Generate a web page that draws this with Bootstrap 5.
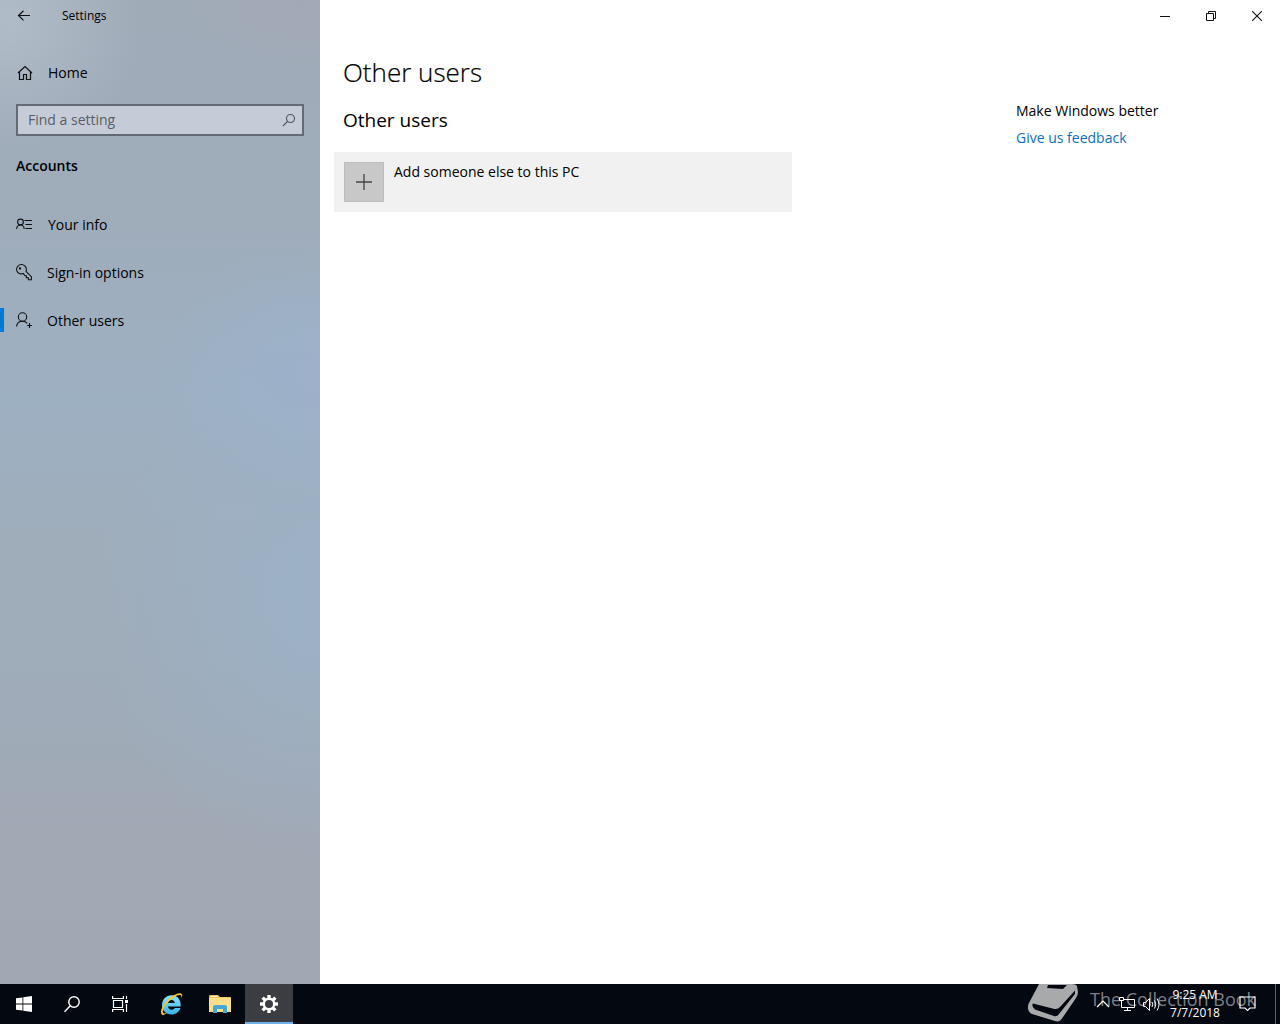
<!DOCTYPE html>
<html lang="en">
<head>
<meta charset="utf-8">
<meta name="viewport" content="width=device-width, initial-scale=1">
<title>Settings</title>
<link rel="stylesheet" href="https://cdn.jsdelivr.net/npm/bootstrap@5.3.0/dist/css/bootstrap.min.css">
<style>
  body { font-family: "Open Sans", "Noto Sans", sans-serif; font-size: 14px; line-height: 20px; color: #000; background: #fff; }
  svg { display: block; flex: none; }
  button { font: inherit; color: inherit; background: none; border: 0; padding: 0; }
  .side-pane {
    width: 320px;
    background:
      radial-gradient(circle at 10px 20px, rgba(180,192,203,.8), rgba(180,192,203,0) 130px),
      radial-gradient(ellipse 170px 130px at 320px 370px, rgba(156,178,205,.8), rgba(156,178,205,0)),
      radial-gradient(ellipse 230px 260px at 320px 600px, rgba(156,178,200,.9), rgba(156,178,200,0)),
      radial-gradient(ellipse 130px 70px at 300px 0, rgba(164,168,182,.9), rgba(164,168,182,0)),
      linear-gradient(180deg, #a0abb8 0, #9facba 200px, #9db0c2 400px, #9fadbb 540px, #9fabb8 720px, #a2a8b4 850px, #a1a7b3 100%);
  }
  .caption-row { height: 32px; font-size: 12px; }
  .caption-text { margin-left: 14px; }
  .back-btn { width: 48px; height: 32px; }
  .win-btn { width: 46px; height: 32px; }
  .nav-row { height: 48px; gap: 15px; padding-left: 16px; color: #000; text-decoration: none; position: relative; }
  .home-row { margin-top: 17px; }
  .nav-row.current::before { content: ""; position: absolute; left: 0; top: 11px; width: 4px; height: 24px; background: #0078d7; }
  .find-box { height: 32px; margin: 7px 16px 0; border: 2px solid #626b75; background: #c6ccd7; padding: 0 6px 0 10px; }
  .find-box input { border: 0; background: none; outline: 0; padding: 0; min-width: 0; color: #000; line-height: 20px; }
  .find-box input::placeholder { color: #575e68; opacity: 1; }
  .group-title { font-size: 14px; font-weight: 600; line-height: 20px; margin: 20px 16px 25px; }
  .page-body { padding: 20px 0 0 14px; }
  .users-col { flex: 0 1 458px; }
  .page-title { font-size: 26px; line-height: 40px; font-weight: 300; margin: 0 9px 14px; -webkit-text-stroke: .2px #000; }
  .section-title { font-size: 19px; line-height: 28px; font-weight: 400; margin: 0 9px 18px; }
  .add-tile { height: 60px; background: #f1f1f1; padding: 10px; gap: 10px; text-align: left; }
  .plus-box { width: 40px; height: 40px; background: #c8c8c8; border: 1px solid #bdbdbd; }
  .help-col { width: 264px; padding-top: 49px; }
  .help-col p { margin-bottom: 7px; }
  .help-col a { color: #0a70c0; text-decoration: none; }
  .taskbar { height: 40px; background: #040810; color: #fff; position: relative; overflow: hidden; }
  .task-btn { width: 48px; height: 40px; }
  .task-btn.running { background: #3b3d42; border-bottom: 2px solid #6fb1e8; padding-top: 2px; margin-left: 1px; }
  .tray { font-size: 12px; line-height: 18px; }
  .clock { width: 70px; text-align: center; }
  .notes-btn { width: 34px; height: 40px; }
  .desk-edge { width: 5px; height: 40px; border-left: 1px solid #5d6066; margin-left: 11px; }
  .stamp { position: absolute; right: 24px; top: 0; height: 40px; gap: 10px; font-size: 18px; color: #7c7f85; pointer-events: none; }
  .stamp span { padding-bottom: 10px; }
</style>
<script src="https://cdn.jsdelivr.net/npm/bootstrap@5.3.0/dist/js/bootstrap.bundle.min.js"></script>
</head>
<body class="d-flex flex-column min-vh-100">
<div class="d-flex flex-grow-1">
  <aside class="side-pane flex-shrink-0">
    <div class="caption-row d-flex align-items-center">
      <button class="back-btn d-flex align-items-center justify-content-center" aria-label="Back">
        <svg width="14" height="12" viewBox="0 0 14 12" fill="none" stroke="#111" stroke-width="1.2"><path d="M13 5.5H1.5M6.5.7L1.5 5.5l5 4.9"/></svg>
      </button>
      <span class="caption-text">Settings</span>
    </div>
    <a href="#" class="nav-row home-row d-flex align-items-center">
      <svg width="17" height="16" viewBox="0 0 17 16" fill="none" stroke="#111" stroke-width="1.2"><path d="M2 8l7-6.500L16 8M3.500 6.800v7.700h4v-5h3v5h4V6.800"/></svg>
      <span>Home</span>
    </a>
    <div class="find-box d-flex align-items-center">
      <input type="text" class="flex-grow-1" placeholder="Find a setting" aria-label="Find a setting">
      <svg width="14" height="14" viewBox="0 0 14 14" fill="none" stroke="#4b525b" stroke-width="1.1"><circle cx="8.500" cy="5.500" r="4"/><path d="M5.500 8.500L.8 13.200"/></svg>
    </div>
    <h2 class="group-title">Accounts</h2>
    <nav>
      <a href="#" class="nav-row d-flex align-items-center">
        <svg width="17" height="16" viewBox="0 0 17 16" fill="none" stroke="#111" stroke-width="1.1"><circle cx="4.500" cy="5" r="2.900"/><path d="M.6 12c.2-2.600 1.600-4 3.900-4s3.500 1.400 3.700 4M8.500 3.500H16M9.500 7.500H16M9.500 11.500H16"/></svg>
        <span>Your info</span>
      </a>
      <a href="#" class="nav-row d-flex align-items-center">
        <svg width="16" height="18" viewBox="0 0 16 18" fill="none" stroke="#111" stroke-width="1.1"><path d="M7.300 9.500C4 10.800.6 8.600.6 5.600a4.900 4.900 0 0 1 9.800-.3c0 .8-.1 1.500-.4 2.100l5.400 5.300v3h-3v-2h-2v-2h-1.500z"/><circle cx="4" cy="4.500" r=".6" fill="#111"/></svg>
        <span>Sign-in options</span>
      </a>
      <a href="#" class="nav-row current d-flex align-items-center" aria-current="page">
        <svg width="16" height="18" viewBox="0 0 16 18" fill="none" stroke="#111" stroke-width="1.1"><circle cx="6.500" cy="5" r="4.200"/><path d="M.6 14.500c.2-3.300 2.600-5.300 5.900-5.300 2.100 0 3.700.8 4.700 2.200M13.500 11v5M11 13.500h5"/></svg>
        <span>Other users</span>
      </a>
    </nav>
  </aside>
  <main class="flex-grow-1">
    <div class="caption-row d-flex justify-content-end">
      <button class="win-btn d-flex align-items-center justify-content-center" aria-label="Minimize"><svg width="10" height="10" viewBox="0 0 10 10" stroke="#111"><path d="M0 5.500h10"/></svg></button>
      <button class="win-btn d-flex align-items-center justify-content-center" aria-label="Restore"><svg width="10" height="10" viewBox="0 0 10 10" fill="none" stroke="#111"><path d="M.5 2.500h7v7h-7zM2.500 2.500v-2h7v7h-2"/></svg></button>
      <button class="win-btn d-flex align-items-center justify-content-center" aria-label="Close"><svg width="10" height="10" viewBox="0 0 10 10" stroke="#111" stroke-width="1.100"><path d="M0 0l10 10M10 0L0 10"/></svg></button>
    </div>
    <div class="page-body d-flex justify-content-between">
      <section class="users-col">
        <h1 class="page-title">Other users</h1>
        <h2 class="section-title">Other users</h2>
        <button class="add-tile d-flex w-100 align-items-start">
          <span class="plus-box d-flex align-items-center justify-content-center"><svg width="16" height="16" viewBox="0 0 16 16" stroke="#444" stroke-width="1.300"><path d="M8 0v16M0 8h16"/></svg></span>
          <span>Add someone else to this PC</span>
        </button>
      </section>
      <section class="help-col">
        <p>Make Windows better</p>
        <a href="#">Give us feedback</a>
      </section>
    </div>
  </main>
</div>
<footer class="taskbar d-flex align-items-center">
  <button class="task-btn d-flex align-items-center justify-content-center" aria-label="Start"><svg width="16" height="16" viewBox="0 0 16 16" fill="#fff"><path d="M0 2.300l6.500-.9v6.100H0zM7.300 1.300L16 0v7.500H7.300zM0 8.400h6.500v6.200L0 13.700zM7.300 8.400H16V16l-8.700-1.300z"/></svg></button>
  <button class="task-btn d-flex align-items-center justify-content-center" aria-label="Search"><svg width="16" height="17" viewBox="0 0 16 17" fill="none" stroke="#fff" stroke-width="1.400"><circle cx="10" cy="6" r="5.200"/><path d="M6.300 9.700L.5 15.800"/></svg></button>
  <button class="task-btn d-flex align-items-center justify-content-center" aria-label="Task view"><svg width="16" height="16" viewBox="0 0 16 16" fill="none" stroke="#fff" stroke-width="1.200"><path d="M.6 0v2.500h10.800V0M.6 16v-2.500h10.800V16M1.500 4.500h9v7h-9zM14.500 0v3M14.500 8v8"/><path d="M13 4h3v3h-3z" fill="#fff" stroke="none"/></svg></button>
  <button class="task-btn d-flex align-items-center justify-content-center ms-1" aria-label="Internet Explorer">
    <svg width="26" height="24" viewBox="0 0 26 24" fill="none"><defs><linearGradient id="ieBlue" x2="0" y2="1"><stop stop-color="#8ce5fa"/><stop offset="1" stop-color="#35b4e8"/></linearGradient></defs><path d="M21.500 16C20 20 17 22.500 12.500 22.500 7 22.500 3 18.500 3 13s4-9.800 9.700-9.800c5.800 0 9.300 4.300 9 11.300H9c.2 2 1.700 3.200 3.600 3.200 1.500 0 2.600-.6 3.100-1.700zM9.100 10.900h6.700c-.3-2-1.500-3-3.300-3s-3 1-3.400 3z" fill="url(#ieBlue)" fill-rule="evenodd"/><path d="M3.300 23C.5 21.300 2.300 14.500 7.800 8.800S19.700.2 22.300 1.700c1.400.9 1 2.800.3 4.700.1-2-.3-3.200-1.600-3.400C18 2.500 13.300 5.700 9.200 10 4.700 14.800 3 19.500 4.300 21c.7.700 2.200.5 4-.4-1.800 1.800-3.900 3-5 2.400z" fill="#f6c62d"/></svg>
  </button>
  <button class="task-btn d-flex align-items-center justify-content-center" aria-label="File Explorer"><svg width="22" height="18" viewBox="0 0 22 18"><path d="M0 1.500Q0 0 1 0h8l2 2h10q1 0 1 1v14H0z" fill="#eec45b"/><path d="M2 1.500h6" stroke="#fff4c9"/><path d="M0 3h22v14H0z" fill="#fbdf8b"/><path d="M4 18v-6q0-2 2-2h10q2 0 2 2v6h-4v-4H8v4z" fill="#45a9d3"/><path d="M8 14h6v3H8z" fill="#fbdf8b"/></svg></button>
  <button class="task-btn running d-flex align-items-center justify-content-center" aria-label="Settings"><svg width="18" height="18" viewBox="-9 -9 18 18"><g fill="#fff"><path id="cog" d="M-1.700-9h3.400v18h-3.400z"/><path d="M-1.700-9h3.400v18h-3.400z" transform="rotate(45)"/><path d="M-1.700-9h3.400v18h-3.400z" transform="rotate(90)"/><path d="M-1.700-9h3.400v18h-3.400z" transform="rotate(135)"/><circle r="6.400"/></g><circle r="4" fill="#3b3d42"/></svg></button>
  <div class="stamp d-flex align-items-center">
    <svg width="52" height="40" viewBox="0 0 52 40"><path fill="#a7a9ab" fill-rule="evenodd" d="M11 0h33q4 0 5 2l1 6q0 3-2 6L34 34.500Q31.500 38.500 27 37L4 30Q-.5 28 0 22.500 0 20 2 17zM20 1l-1 3 16 1 4-4zM5 19.500Q3 22 7 25.500l19 6.500q3 1 5-2L47 10V6.500L32 23q-2 2.500-5.500 2z"/></svg>
    <span>The Collection Book</span>
  </div>
  <div class="tray d-flex align-items-center ms-auto position-relative">
    <button aria-label="Show hidden icons"><svg width="14" height="10" viewBox="0 0 14 10" fill="none" stroke="#fff" stroke-width="1.200"><path d="M1 8l6-6 6 6"/></svg></button>
    <button class="ms-2" aria-label="Network"><svg width="17" height="15" viewBox="0 0 17 15" fill="none" stroke="#fff"><path d="M5 2.500h11.500v8H3.500V5M9.500 10.500v3M6 13.500h7M1.500.5h4v3h-4zM3.500 3.500V7"/></svg></button>
    <button class="ms-2" aria-label="Volume"><svg width="17" height="15" viewBox="0 0 17 15" fill="none" stroke="#fff"><path d="M.5 5.500h2l4-4v12l-4-4h-2zM9 5q1.500 2.500 0 5M11.500 3.500q2.500 4 0 8M14 1.500q4 6 0 12"/></svg></button>
    <div class="clock">9:25 AM<br>7/7/2018</div>
    <button class="notes-btn d-flex align-items-center justify-content-center" aria-label="Notifications"><svg width="17" height="16" viewBox="0 0 17 16" fill="none" stroke="#fff" stroke-width="1.200"><path d="M1 1h15v11h-5l-2.500 2.500L6 12H1z"/></svg></button>
    <div class="desk-edge"></div>
  </div>
</footer>
</body>
</html>
